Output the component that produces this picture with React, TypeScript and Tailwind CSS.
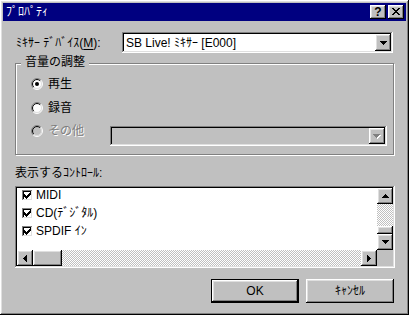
import React from "react";

const raised =
  "shadow-[inset_-1px_-1px_#000,inset_1px_1px_#fff,inset_-2px_-2px_#808080,inset_2px_2px_#dfdfdf]";
const sunken =
  "shadow-[inset_-1px_-1px_#fff,inset_1px_1px_#808080,inset_-2px_-2px_#dfdfdf,inset_2px_2px_#000]";
const dither =
  "bg-[image:repeating-conic-gradient(#c0c0c0_0%_25%,#ffffff_0%_50%)] bg-[length:2px_2px]";

function Arrow({ dir, color = "#000" }: { dir: "up" | "down" | "left" | "right"; color?: string }) {
  const d =
    dir === "down"
      ? "M0 0h7v1h-1v1h-1v1h-1v1h-1v-1h-1v-1h-1v-1h-1z"
      : dir === "up"
      ? "M3 0h1v1h1v1h1v1h1v1h-7v-1h1v-1h1v-1h1z"
      : dir === "left"
      ? "M3 0h1v7h-1v-1h-1v-1h-1v-1h-1v-1h1v-1h1v-1h1z"
      : "M0 0h1v1h1v1h1v1h1v1h-1v1h-1v1h-1v1h-1z";
  const w = dir === "down" || dir === "up" ? 7 : 4;
  const h = dir === "down" || dir === "up" ? 4 : 7;
  return (
    <svg width={w} height={h} viewBox={`0 0 ${w} ${h}`} shapeRendering="crispEdges">
      <path d={d} fill={color} />
    </svg>
  );
}

function DisabledDownArrow() {
  return (
    <svg width={8} height={5} viewBox="0 0 8 5" shapeRendering="crispEdges">
      <path d="M1 1h7v1h-1v1h-1v1h-1v1h-1v-1h-1v-1h-1v-1h-1z" fill="#fff" />
      <path d="M0 0h7v1h-1v1h-1v1h-1v1h-1v-1h-1v-1h-1v-1h-1z" fill="#808080" />
    </svg>
  );
}

function Radio({ checked, disabled }: { checked?: boolean; disabled?: boolean }) {
  const k = 0.7071;
  const arc = (r: number, tl: boolean, color: string) => {
    const x1 = 6 - r * k,
      y1 = 6 + r * k,
      x2 = 6 + r * k,
      y2 = 6 - r * k;
    const d = tl
      ? `M${x1} ${y1} A${r} ${r} 0 0 1 ${x2} ${y2}`
      : `M${x2} ${y2} A${r} ${r} 0 0 1 ${x1} ${y1}`;
    return <path d={d} stroke={color} strokeWidth={1} fill="none" />;
  };
  return (
    <svg width={12} height={12} viewBox="0 0 12 12" className="shrink-0">
      <circle cx={6} cy={6} r={5} fill={disabled ? "#c0c0c0" : "#fff"} />
      {arc(5.5, true, "#808080")}
      {arc(5.5, false, "#fff")}
      {arc(4.5, true, "#000")}
      {arc(4.5, false, "#dfdfdf")}
      {checked && <circle cx={6} cy={6} r={2} fill="#000" />}
    </svg>
  );
}

function Check() {
  return (
    <div className={`w-[11px] h-[11px] bg-white shrink-0 flex items-center justify-center ${sunken}`}>
      <svg width={7} height={7} viewBox="0 0 7 7" shapeRendering="crispEdges">
        <path d="M6 0h1v3h-1v1h-1v1h-1v1h-1v1h-1v-1h-1v-1h-1v-3h1v1h1v1h1v-1h1v-1h1v-1h1z" fill="#000" />
      </svg>
    </div>
  );
}

function ScrollBtn({ dir }: { dir: "up" | "down" | "left" | "right" }) {
  return (
    <div className={`w-[16px] h-[16px] bg-[#c0c0c0] shrink-0 flex items-center justify-center ${raised}`}>
      <Arrow dir={dir} />
    </div>
  );
}

export default function App() {
  return (
    <div
      className={`w-[409px] h-[315px] bg-[#c0c0c0] p-[3px] flex flex-col font-['Liberation_Sans','Noto_Sans_CJK_JP',sans-serif] text-[12px] leading-[14px] text-black ${raised}`}
    >
      {/* Title bar */}
      <div className="h-[18px] bg-[#000080] flex items-center pl-[3px] pr-[2px] shrink-0">
        <span className="text-white text-[12px] leading-[14px]">ﾌﾟﾛﾊﾟﾃｨ</span>
        <div className="ml-auto flex gap-[2px]">
          <div className={`w-[16px] h-[14px] bg-[#c0c0c0] flex items-center justify-center ${raised}`}>
            <span className="font-['Liberation_Sans',sans-serif] font-bold text-[12px] leading-[12px] -mt-[1px]">?</span>
          </div>
          <div className={`w-[16px] h-[14px] bg-[#c0c0c0] flex items-center justify-center ${raised}`}>
            <svg width={8} height={7} viewBox="0 0 8 7" shapeRendering="crispEdges" className="-mt-[1px]">
              <path
                d="M0 0h2v1h1v1h2v-1h1v-1h2v1h-1v1h-1v1h-1v1h1v1h1v1h1v1h-2v-1h-1v-1h-2v1h-1v1h-2v-1h1v-1h1v-1h1v-1h-1v-1h-1v-1h-1z"
                fill="#000"
              />
            </svg>
          </div>
        </div>
      </div>

      {/* Content */}
      <div className="pl-[12px] pr-[11px] flex flex-col">
        {/* Mixer device row */}
        <div className="mt-[11px] h-[21px] flex items-center">
          <div className="w-[107px] pl-[1px] whitespace-nowrap">
            ﾐｷｻｰ ﾃﾞﾊﾞｲｽ(<span className="underline underline-offset-2">M</span>):
          </div>
          <div className={`w-[271px] h-[21px] bg-white flex items-center pl-[4px] pr-[2px] ${sunken}`}>
            <span className="whitespace-nowrap">SB Live! ﾐｷｻｰ [E000]</span>
            <div className={`ml-auto w-[16px] h-[17px] bg-[#c0c0c0] flex items-center justify-center ${raised}`}>
              <Arrow dir="down" />
            </div>
          </div>
        </div>

        {/* Group box */}
        <div className="mt-[10px] w-[379px] h-[92px] relative border border-[#808080] shadow-[inset_1px_1px_#fff,1px_1px_#fff] pl-[15px] flex flex-col">
          <div className="absolute left-[5px] top-[-9px] px-[4px] bg-[#c0c0c0] leading-[14px]">音量の調整</div>
          <div className="mt-[13px] h-[14px] flex items-center">
            <Radio checked />
            <span className="ml-[5px]">再生</span>
          </div>
          <div className="mt-[10px] h-[14px] flex items-center">
            <Radio />
            <span className="ml-[5px]">録音</span>
          </div>
          <div className="mt-[9px] flex items-start">
            <div className="w-[79px] h-[14px] flex items-center">
              <Radio disabled />
              <span className="ml-[5px] text-[#808080] [text-shadow:1px_1px_0_#fff]">その他</span>
            </div>
            <div className={`mt-[2px] w-[277px] h-[20px] bg-[#c0c0c0] flex items-center justify-end pr-[2px] ${sunken}`}>
              <div className={`w-[16px] h-[16px] bg-[#c0c0c0] flex items-center justify-center ${raised}`}>
                <DisabledDownArrow />
              </div>
            </div>
          </div>
        </div>

        {/* Controls label */}
        <div className="mt-[11px] h-[14px] whitespace-nowrap">表示するｺﾝﾄﾛｰﾙ:</div>

        {/* List box */}
        <div className={`mt-[6px] w-[380px] h-[82px] bg-white p-[2px] flex flex-col ${sunken}`}>
          <div className="h-[62px] flex">
            <div className="flex-1 flex flex-col pl-[5px]">
              {["MIDI", "CD(ﾃﾞｼﾞﾀﾙ)", "SPDIF ｲﾝ"].map((t) => (
                <div key={t} className="h-[18px] flex items-start">
                  <div className="mt-[2px]">
                    <Check />
                  </div>
                  <span className="ml-[3px] whitespace-nowrap">{t}</span>
                </div>
              ))}
            </div>
            <div className="w-[16px] flex flex-col">
              <ScrollBtn dir="up" />
              <div className={`flex-1 flex flex-col justify-end ${dither}`}>
                <div className={`h-[8px] bg-[#c0c0c0] ${raised}`} />
              </div>
              <ScrollBtn dir="down" />
            </div>
          </div>
          <div className="h-[16px] flex">
            <ScrollBtn dir="left" />
            <div className={`w-[29px] h-[16px] bg-[#c0c0c0] shrink-0 ${raised}`} />
            <div className={`flex-1 ${dither}`} />
            <ScrollBtn dir="right" />
            <div className="w-[16px] h-[16px] bg-[#c0c0c0] shrink-0" />
          </div>
        </div>

        {/* Buttons */}
        <div className="mt-[11px] flex justify-end gap-[7px] pr-[1px]">
          <div className="w-[88px] h-[24px] border border-black">
            <div
              className={`w-full h-full bg-[#c0c0c0] flex items-center justify-center ${raised}`}
            >
              OK
            </div>
          </div>
          <div className={`w-[88px] h-[24px] bg-[#c0c0c0] flex items-center justify-center ${raised}`}>
            ｷｬﾝｾﾙ
          </div>
        </div>
      </div>
    </div>
  );
}
